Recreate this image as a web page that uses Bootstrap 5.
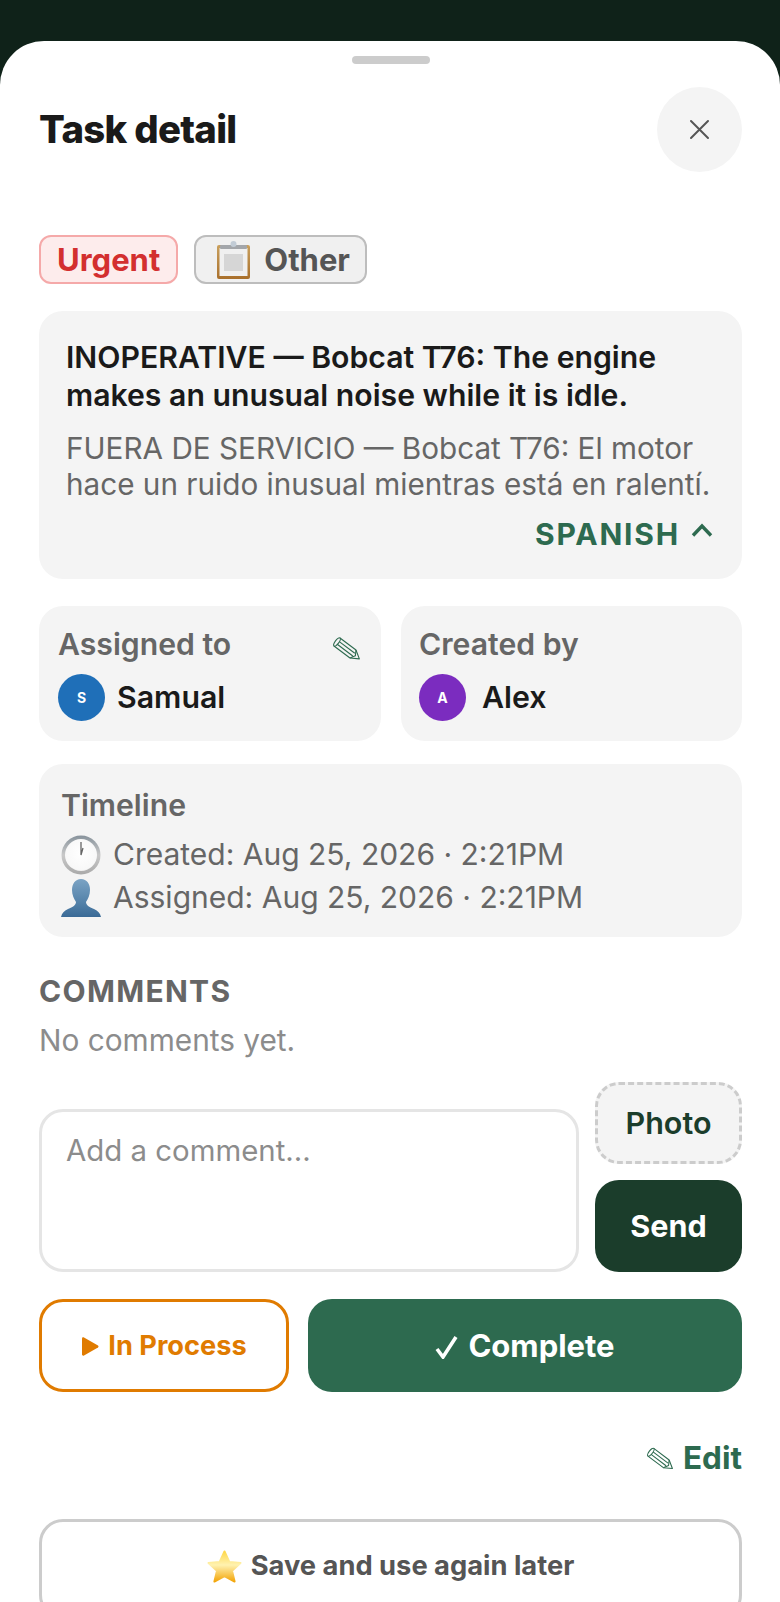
<!DOCTYPE html>
<html lang="en">
<head>
<meta charset="utf-8">
<title>Task detail</title>
<link href="https://cdn.jsdelivr.net/npm/bootstrap@5.3.0/dist/css/bootstrap.min.css" rel="stylesheet">
<style>
html,body{height:1602px;overflow:hidden}
body{background:#0f2219;font-family:Inter,"Liberation Sans",sans-serif;color:#1a1a1a}
.sheet{margin-top:41px;background:#fff;border-radius:44px 44px 0 0;padding:15px 38px 0 39px;height:1561px;overflow:hidden}
.grab{width:78px;height:8px;border-radius:4px;background:#ccc;margin:0 auto 23px}
.head-row{height:85px}
.title-t{font-size:38.300px;font-weight:800;letter-spacing:-.7px;margin:0;line-height:1}
.close-c{width:85px;height:85px;border-radius:50%;background:#f4f4f4;border:0;padding:0}
.tags{margin-top:63px;gap:16px}
.tag{height:49px;border:2px solid;border-radius:12px;font-size:31px;font-weight:700;line-height:1}
.tag-red{background:#fdecec;border-color:#f5a9a9;color:#d32f2f;padding:0 16px}
.tag-gray{background:#f0f0f0;border-color:#bdbdbd;color:#555;padding:0 15px 0 20px;gap:13px}
.panel{background:#f4f4f4;border-radius:24px}
.desc{margin-top:27px;height:268px;padding:28px 24px 0 27px}
.en{font-size:30.2px;font-weight:600;line-height:37.5px;margin:0;color:#1a1a1a}
.es{font-size:29.700px;line-height:36px;margin:16px 0 0;color:#666}
.lang{font-size:30px;font-weight:700;letter-spacing:1.8px;color:#2d6a4f;line-height:36px;margin-top:14px;padding-right:5px;gap:11px}
.people{margin-top:27px;gap:20px}
.person{flex:1 1 0;height:135px;padding:20px 20px 0 19px}
.person-b{padding-left:18px}
.lbl{font-size:30.2px;font-weight:600;color:#666;line-height:36px}
.who{margin-top:12px;gap:12px;font-size:30.300px;font-weight:600;line-height:47px;color:#1a1a1a}
.ava{width:47px;height:47px;border-radius:50%;color:#fff;font-size:14px;font-weight:700}
.timeline{margin-top:23px;height:173px;padding:23px 22px 0}
.tl-line{font-size:30px;line-height:43px;color:#666;gap:12px;height:43px}
.tl-first{margin-top:10px}
.cm-h{font-size:30px;font-weight:700;letter-spacing:1.3px;color:#666;line-height:36px;margin-top:36px}
.cm-none{font-size:29.800px;color:#8c8c8c;line-height:36px;margin-top:13px}
.composer{margin-top:24px;gap:16px}
.cm-input{flex:1 1 0;min-width:0;height:163px;border:3px solid #e5e5e5;border-radius:24px;padding:21px 24px;font-size:29.400px;line-height:36px;resize:none;color:#333;outline:0}
.cm-input::placeholder{color:#8c8c8c;opacity:1}
.cm-side{width:147px;gap:16px}
.btn-photo{height:82px;background:#f4f4f4;border:3px dashed #ccc;border-radius:24px;color:#1b3d2b;font-size:30.500px;font-weight:600;padding:0}
.btn-send{height:92px;background:#1b3d2b;border:0;border-radius:24px;color:#fff;font-size:30.500px;font-weight:700;padding:0}
.acts{margin-top:27px;gap:19px}
.btn-proc{width:250px;height:93px;background:#fff;border:3px solid #e07b00;border-radius:24px;color:#e07b00;font-size:27.200px;font-weight:700;padding:2px 0 0;gap:9px}
.btn-done{flex:1 1 0;height:93px;background:#2d6a4f;border:0;border-radius:24px;color:#fff;font-size:31px;font-weight:700;padding:2px 0 0;gap:10px}
.edit-l{margin-top:48px;font-size:31.500px;font-weight:700;color:#2d6a4f;line-height:36px;gap:9px}
.btn-save{margin-top:43px;width:100%;height:100px;background:#fff;border:3px solid #ccc;border-radius:24px;color:#555;font-size:27.300px;font-weight:700;padding:0 0 6px;gap:9px}
</style>
</head>
<body>
<div class="sheet">
  <div class="grab"></div>
  <div class="head-row d-flex justify-content-between align-items-center">
    <h1 class="title-t">Task detail</h1>
    <button class="close-c d-flex align-items-center justify-content-center" aria-label="Close">
      <svg width="21" height="21" viewBox="0 0 21 21"><path d="M2 2 19 19M19 2 2 19" stroke="#555" stroke-width="2" stroke-linecap="round"/></svg>
    </button>
  </div>

  <div class="tags d-flex">
    <span class="tag tag-red d-inline-flex align-items-center">Urgent</span>
    <span class="tag tag-gray d-inline-flex align-items-center">
      <svg width="35" height="38" viewBox="0 0 35 38">
        <defs><linearGradient id="gb" x1="0" y1="0" x2="0" y2="1"><stop offset="0" stop-color="#c9a05e"/><stop offset="1" stop-color="#a9702c"/></linearGradient></defs>
        <rect x="1" y="4" width="33" height="34" rx="2" fill="url(#gb)"/>
        <rect x="3.500" y="7" width="28" height="28" fill="#f0f0f0"/>
        <rect x="8" y="13" width="19" height="17" fill="#d6d6d6"/>
        <rect x="4" y="4" width="27" height="4" rx="1" fill="#a3a6aa"/>
        <circle cx="17.500" cy="3" r="3" fill="#c2ccd6"/>
      </svg>
      Other
    </span>
  </div>

  <div class="panel desc">
    <p class="en">INOPERATIVE — Bobcat T76: The engine makes an unusual noise while it is idle.</p>
    <p class="es">FUERA DE SERVICIO — Bobcat T76: El motor hace un ruido inusual mientras está en ralentí.</p>
    <div class="lang d-flex justify-content-end align-items-center">
      <span>SPANISH</span>
      <svg width="22" height="15" viewBox="0 0 22 15" class="mb-2"><path d="M2 12.500 11 3l9 9.500" fill="none" stroke="#2d6a4f" stroke-width="3.400"/></svg>
    </div>
  </div>

  <div class="people d-flex">
    <div class="panel person">
      <div class="d-flex justify-content-between align-items-center">
        <span class="lbl">Assigned to</span>
        <svg width="28" height="24" viewBox="0 0 28 24" class="mt-2"><g transform="translate(4 6) rotate(37)" fill="none" stroke="#2d6a4f" stroke-width="1.100" stroke-linejoin="round"><path d="M0-5H20L28 0 20 5H0C-2.500 5-2.500-5 0-5z"/><path d="M0-5C2.500-5 2.500 5 0 5M2-1.700H21M2 1.700H21M20-5 23 0 20 5"/></g></svg>
      </div>
      <div class="who d-flex align-items-center">
        <span class="ava d-flex align-items-center justify-content-center" style="background:#1f6fb8">S</span>
        <span>Samual</span>
      </div>
    </div>
    <div class="panel person person-b">
      <div class="lbl">Created by</div>
      <div class="who d-flex align-items-center">
        <span class="ava d-flex align-items-center justify-content-center" style="background:#7b2cbf">A</span>
        <span class="ms-1">Alex</span>
      </div>
    </div>
  </div>

  <div class="panel timeline">
    <div class="lbl">Timeline</div>
    <div class="tl-line tl-first d-flex align-items-center">
      <svg width="40" height="40" viewBox="0 0 40 40">
        <defs><radialGradient id="cf" cx=".5" cy=".45" r=".6"><stop offset="0" stop-color="#fff"/><stop offset=".85" stop-color="#f8f8f8"/><stop offset="1" stop-color="#e2e2e2"/></radialGradient>
        <linearGradient id="cr" x1="0" y1="0" x2="0" y2="1"><stop offset="0" stop-color="#87929b"/><stop offset=".5" stop-color="#c9c9c9"/><stop offset="1" stop-color="#a9a9a9"/></linearGradient></defs>
        <circle cx="20" cy="20" r="19.500" fill="url(#cr)"/>
        <circle cx="20" cy="20" r="16" fill="url(#cf)"/>
        <path d="M20 7v13l2-7" fill="none" stroke="#666" stroke-width="1.300"/>
      </svg>
      <span>Created: Aug 25, 2026 · 2:21PM</span>
    </div>
    <div class="tl-line d-flex align-items-center">
      <svg width="40" height="38" viewBox="0 0 40 38">
        <defs><linearGradient id="bu" x1="0" y1="0" x2="0" y2="1"><stop offset="0" stop-color="#7ba3c4"/><stop offset=".6" stop-color="#5583aa"/><stop offset="1" stop-color="#3a6a96"/></linearGradient></defs>
        <path d="M20 0c6 0 9 5 9 11 0 5-2 9-4 12 0 3 3 5 8 7 4 2 6 4 7 8H0c1-4 3-6 7-8 5-2 8-4 8-7-2-3-4-7-4-12 0-6 3-11 9-11z" fill="url(#bu)"/>
      </svg>
      <span>Assigned: Aug 25, 2026 · 2:21PM</span>
    </div>
  </div>

  <div class="cm-h">COMMENTS</div>
  <div class="cm-none">No comments yet.</div>

  <div class="composer d-flex align-items-end">
    <textarea class="cm-input" placeholder="Add a comment..."></textarea>
    <div class="cm-side d-flex flex-column">
      <button class="btn-photo">Photo</button>
      <button class="btn-send">Send</button>
    </div>
  </div>

  <div class="acts d-flex">
    <button class="btn-proc d-flex align-items-center justify-content-center">
      <svg width="18" height="19" viewBox="0 0 18 19"><path d="M1 1.500c0-1 1-1.500 2-1l14 8c.7.5.7 1.500 0 2l-14 8c-1 .5-2 0-2-1z" fill="#e07b00"/></svg>
      <span>In Process</span>
    </button>
    <button class="btn-done d-flex align-items-center justify-content-center">
      <svg width="23" height="24" viewBox="0 0 23 24"><path d="M2 14 8 22 21 2" fill="none" stroke="#fff" stroke-width="3.600"/></svg>
      <span>Complete</span>
    </button>
  </div>

  <div class="edit-l d-flex justify-content-end align-items-center">
    <svg width="27" height="24" viewBox="0 0 28 24"><g transform="translate(4 6) rotate(37)" fill="none" stroke="#2d6a4f" stroke-width="1.100" stroke-linejoin="round"><path d="M0-5H20L28 0 20 5H0C-2.500 5-2.500-5 0-5z"/><path d="M0-5C2.500-5 2.500 5 0 5M2-1.700H21M2 1.700H21M20-5 23 0 20 5"/></g></svg>
    <span>Edit</span>
  </div>

  <button class="btn-save d-flex align-items-center justify-content-center">
    <svg width="35" height="33" viewBox="0 0 35 33">
      <defs><linearGradient id="st" x1="0" y1="0" x2="0" y2="1"><stop offset="0" stop-color="#ffd84a"/><stop offset=".45" stop-color="#fff2b0"/><stop offset="1" stop-color="#f3a60b"/></linearGradient></defs>
      <path d="M17.500 1.500 22.300 11.900 33.500 13 25 20.800 27.600 31.500 17.500 26 7.400 31.500 10 20.800 1.500 13 12.700 11.900z" fill="url(#st)" stroke="url(#st)" stroke-width="2" stroke-linejoin="round"/>
    </svg>
    <span>Save and use again later</span>
  </button>
</div>
<script src="https://cdn.jsdelivr.net/npm/bootstrap@5.3.0/dist/js/bootstrap.bundle.min.js"></script>
</body>
</html>
